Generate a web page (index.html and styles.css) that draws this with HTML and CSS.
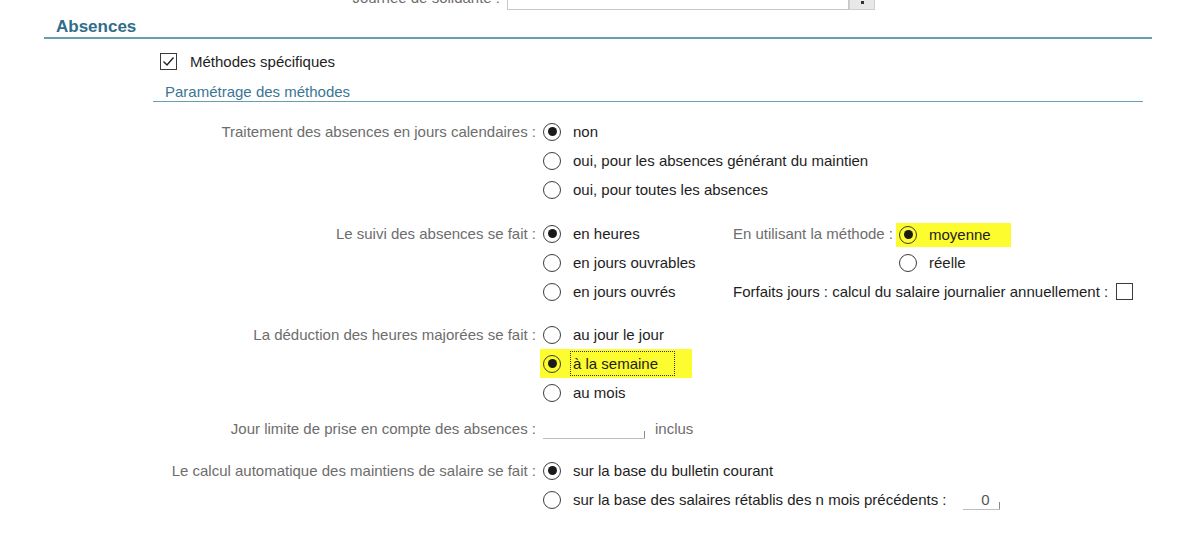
FILE: index.html
```html
<!DOCTYPE html>
<html lang="fr">
<head>
    <meta charset="UTF-8">
    <title>Absences</title>
    <link rel="stylesheet" href="styles.css">
</head>
<body>

    <div class="top-row">
        <span class="top-label">Journée de solidarité :</span>
        <div class="combo">
            <span class="combo-box"></span>
            <span class="combo-btn"><span class="arrow"></span></span>
        </div>
    </div>

    <h2 class="section-title">Absences</h2>

    <label class="check-row">
        <span class="checkbox checked">
            <svg width="15" height="15" viewBox="0 0 15 15"><path d="M2.5 7.5 L6 11 L12.5 3.5" fill="none" stroke="#222" stroke-width="1.4"/></svg>
        </span>
        Méthodes spécifiques
    </label>

    <h3 class="sub-title">Paramétrage des méthodes</h3>

    <div class="group g1">
        <div class="label">Traitement des absences en jours calendaires :</div>
        <div class="options">
            <div class="option"><span class="radio on"></span>non</div>
            <div class="option"><span class="radio"></span>oui, pour les absences générant du maintien</div>
            <div class="option"><span class="radio"></span>oui, pour toutes les absences</div>
        </div>
    </div>

    <div class="group g2">
        <div class="label">Le suivi des absences se fait :</div>
        <div class="options suivi">
            <div class="option"><span class="radio on"></span>en heures</div>
            <div class="label inner">En utilisant la méthode :</div>
            <div class="option hl wide"><span class="radio on"></span>moyenne</div>

            <div class="option"><span class="radio"></span>en jours ouvrables</div>
            <div></div>
            <div class="option"><span class="radio"></span>réelle</div>

            <div class="option"><span class="radio"></span>en jours ouvrés</div>
            <div class="forfait">Forfaits jours : calcul du salaire journalier annuellement : <span class="checkbox"></span></div>
        </div>
    </div>

    <div class="group g3">
        <div class="label">La déduction des heures majorées se fait :</div>
        <div class="options">
            <div class="option"><span class="radio"></span>au jour le jour</div>
            <div class="option hl sem"><span class="radio on"></span><span class="focus">à la semaine</span></div>
            <div class="option"><span class="radio"></span>au mois</div>
        </div>
    </div>

    <div class="group g4">
        <div class="label">Jour limite de prise en compte des absences :</div>
        <div class="options">
            <div class="option field-row">
                <span class="field long"></span>
                <span class="muted">inclus</span>
            </div>
        </div>
    </div>

    <div class="group g5">
        <div class="label">Le calcul automatique des maintiens de salaire se fait :</div>
        <div class="options">
            <div class="option"><span class="radio on"></span>sur la base du bulletin courant</div>
            <div class="option"><span class="radio"></span>sur la base des salaires rétablis des n mois précédents :
                <span class="field short">0</span>
            </div>
        </div>
    </div>

</body>
</html>
```

FILE: styles.css
```css
body {
    margin: 0;
    font-family: "Liberation Sans", Arial, sans-serif;
    font-size: 15px;
    color: #1e1e1e;
    background: #fff;
    width: 1181px;
    height: 555px;
    overflow: hidden;
}

/* top partial row */
.top-row {
    display: flex;
    align-items: flex-end;
    height: 22px;
    margin-top: -12px;
}

.top-label {
    width: 500px;
    text-align: right;
    color: #6d6d6d;
    line-height: 16px;
    padding-bottom: 4px;
}

.combo {
    display: flex;
    margin-left: 7px;
    height: 22px;
}

.combo-box {
    width: 342px;
    border: 1px solid #c8c8c8;
    border-top: none;
    box-sizing: border-box;
}

.combo-btn {
    width: 26px;
    background: #e8e8e8;
    border: 1px solid #cfcfcf;
    box-sizing: border-box;
    display: flex;
    justify-content: center;
    align-items: flex-end;
    padding-bottom: 5px;
}

.arrow {
    width: 3px;
    height: 3px;
    background: #333;
}

/* headings */
.section-title {
    margin: 7px 0 0 44px;
    width: 1108px;
    padding-left: 12px;
    box-sizing: border-box;
    font-size: 17px;
    font-weight: bold;
    line-height: 20px;
    color: #2f6d8a;
    border-bottom: 2px solid #6b9db2;
}

.check-row {
    display: flex;
    align-items: center;
    height: 24px;
    margin: 10px 0 0 160px;
    gap: 13px;
    color: #1e1e1e;
}

.checkbox {
    width: 17px;
    height: 17px;
    border: 1px solid #3a3a3a;
    box-sizing: border-box;
    display: inline-flex;
    align-items: center;
    justify-content: center;
    background: #fff;
}

.sub-title {
    margin: 10px 0 0 153px;
    width: 990px;
    padding-left: 12px;
    box-sizing: border-box;
    font-size: 15px;
    font-weight: normal;
    line-height: 18px;
    color: #3a7694;
    border-bottom: 1.5px solid #6b9db2;
}

/* form groups */
.group {
    display: grid;
    grid-template-columns: 540px auto;
}

.g1 { margin-top: 15px; }
.g2 { margin-top: 15px; }
.g3 { margin-top: 14px; }
.g4 { margin-top: 7px; }
.g5 { margin-top: 13px; }

.label {
    text-align: right;
    padding-right: 4px;
    color: #6d6d6d;
    height: 29px;
    line-height: 29px;
    white-space: nowrap;
}

.options {
    display: flex;
    flex-direction: column;
    align-items: flex-start;
}

.option {
    display: flex;
    align-items: center;
    height: 29px;
    padding-left: 3px;
    gap: 12px;
    white-space: nowrap;
}

.radio {
    width: 18px;
    height: 18px;
    border: 1.4px solid #3c3c3c;
    border-radius: 50%;
    box-sizing: border-box;
    display: inline-flex;
    align-items: center;
    justify-content: center;
    background: #fff;
    flex-shrink: 0;
}

.radio.on::after {
    content: "";
    width: 9px;
    height: 9px;
    border-radius: 50%;
    background: #1a1a1a;
}

.hl {
    background: #fcfc2e;
}

.hl .radio {
    background: transparent;
}

.hl.wide {
    height: 24px;
    margin-top: 2px;
    padding-right: 20px;
}

.hl.sem {
    width: 152px;
    box-sizing: border-box;
}

.focus {
    margin-left: -3px;
    padding: 0 16px 0 2px;
    height: 23px;
    line-height: 23px;
    border: 1px dotted #333;
}

/* suivi grid */
.suivi {
    display: grid;
    grid-template-columns: 190px 166px auto;
    grid-auto-rows: 29px;
    align-items: center;
    justify-items: start;
}

.label.inner {
    padding-right: 3px;
    justify-self: stretch;
}

.suivi .option {
    align-self: stretch;
}

.suivi .hl.wide {
    align-self: center;
}

.forfait {
    grid-column: 2 / 4;
    display: flex;
    align-items: center;
    gap: 8px;
    padding-left: 3px;
    white-space: nowrap;
}

/* fields */
.field {
    display: inline-block;
    height: 20px;
    border-bottom: 1px solid #bdbdbd;
    position: relative;
    box-sizing: border-box;
    color: #555;
    text-align: right;
    line-height: 20px;
}

.field::after {
    content: "";
    position: absolute;
    right: 0;
    bottom: 0;
    height: 7px;
    border-right: 1px solid #8a8a8a;
}

.field.long {
    width: 102px;
}

.field.short {
    width: 37px;
    margin-left: 4px;
    padding-right: 10px;
}

.field-row {
    gap: 10px;
}

.muted {
    color: #6d6d6d;
}
```
